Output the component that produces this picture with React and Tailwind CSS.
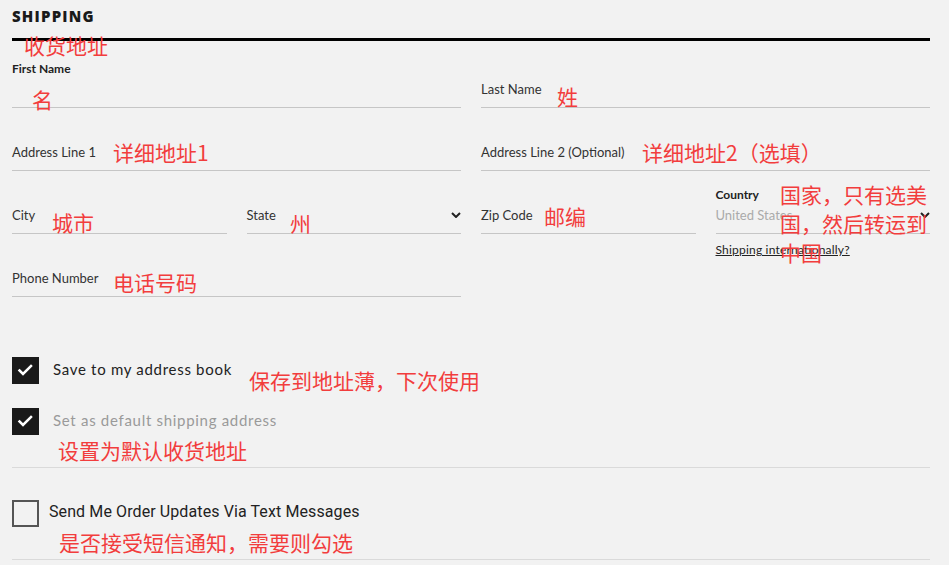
const lato = { fontFamily: 'Lato, "Noto Sans", sans-serif' }

function Chevron({ className }) {
  return (
    <svg width="10" height="6" viewBox="0 0 10 6" className={className}>
      <path d="M1 1 L5 5 L9 1" fill="none" stroke="#222" strokeWidth="2" />
    </svg>
  )
}

function Field({ label, span = 'col-span-2', chevron }) {
  return (
    <div className={`${span} h-[63px] flex flex-col justify-end pb-[10px] border-b border-[#c6c6c6]`}>
      <div className="flex items-center justify-between">
        <span className="text-[13px] leading-[16px] text-[#333]">{label}</span>
        {chevron && <Chevron />}
      </div>
    </div>
  )
}

function Note({ className, children }) {
  return (
    <div
      className={`absolute whitespace-nowrap text-[21px] leading-[21px] text-[#f23d3d] ${className}`}
      style={{ fontFamily: '"Noto Sans CJK SC", "Noto Sans", sans-serif' }}
    >
      {children}
    </div>
  )
}

function CheckBox({ checked }) {
  if (!checked) {
    return <span className="w-[27px] h-[27px] shrink-0 border-2 border-[#555]" />
  }
  return (
    <span className="w-[27px] h-[27px] shrink-0 bg-[#1a1a1a] flex items-center justify-center">
      <svg width="27" height="27" viewBox="0 0 27 27">
        <path d="M7.5 13.5 L11 17 L19 9" fill="none" stroke="#fff" strokeWidth="2.5" strokeLinecap="square" />
      </svg>
    </span>
  )
}

export default function App() {
  return (
    <div className="relative w-[949px] h-[565px] overflow-hidden bg-[#f2f2f2]" style={lato}>
      <div className="mx-3 w-[918px]">
        <h2
          className="pt-[6px] pb-[12px] text-[15px] leading-[20px] font-extrabold tracking-[1.2px] text-[#1a1a1a]"
          style={{ fontFamily: '"Open Sans", sans-serif' }}
        >
          SHIPPING
        </h2>
        <div className="h-[3px] bg-black" />

        <div className="mt-1 grid grid-cols-4 gap-x-5">
          <div className="col-span-2 h-[63px] pt-[17px] border-b border-[#c6c6c6]">
            <div className="text-[12px] leading-[14px] font-bold text-[#222]">First Name</div>
          </div>
          <Field label="Last Name" />

          <Field label="Address Line 1" />
          <Field label="Address Line 2 (Optional)" />

          <Field label="City" span="col-span-1" />
          <Field label="State" span="col-span-1" chevron />
          <Field label="Zip Code" span="col-span-1" />
          <div className="col-span-1 h-[63px] pt-[17px] border-b border-[#c6c6c6]">
            <div className="text-[12px] leading-[14px] font-bold text-[#222]">Country</div>
            <div className="mt-[5px] flex items-center justify-between">
              <span className="text-[13px] leading-[16px] text-[#aaa]">United States</span>
              <Chevron />
            </div>
          </div>

          <Field label="Phone Number" />
          <div className="col-start-4 pt-[9px]">
            <a className="block text-[12px] leading-[14px] tracking-[0.2px] text-[#222] underline">Shipping internationally?</a>
          </div>
        </div>

        <div className="mt-[60px] pb-[32px] border-b border-[#dadada]">
          <label className="flex items-center gap-[14px]">
            <CheckBox checked />
            <span className="pb-[4px] text-[15px] leading-[20px] tracking-[0.7px] text-[#222]">Save to my address book</span>
          </label>
          <label className="mt-[24px] flex items-center gap-[14px]">
            <CheckBox checked />
            <span className="pb-[4px] text-[15px] leading-[20px] tracking-[0.7px] text-[#9a9a9a]">Set as default shipping address</span>
          </label>
        </div>

        <div className="pt-[32px] pb-[32px] border-b border-[#dadada]">
          <label className="flex items-center gap-[10px]">
            <CheckBox />
            <span
              className="pb-[4px] text-[16px] leading-[20px] tracking-[0.1px] text-[#222]"
              style={{ fontFamily: 'Roboto, sans-serif' }}
            >
              Send Me Order Updates Via Text Messages
            </span>
          </label>
        </div>
      </div>

      <Note className="left-[24px] top-[35px]">收货地址</Note>
      <Note className="left-[32px] top-[89px]">名</Note>
      <Note className="left-[557px] top-[86px]">姓</Note>
      <Note className="left-[113px] top-[142px]">详细地址1</Note>
      <Note className="left-[642px] top-[142px]">详细地址2（选填）</Note>
      <Note className="left-[52px] top-[212px]">城市</Note>
      <Note className="left-[290px] top-[213px]">州</Note>
      <Note className="left-[544px] top-[206px]">邮编</Note>
      <Note className="left-[780px] top-[180px] leading-[29px]">
        国家，只有选美
        <br />
        国，然后转运到
        <br />
        中国
      </Note>
      <Note className="left-[113px] top-[272px]">电话号码</Note>
      <Note className="left-[249px] top-[370px]">保存到地址薄，下次使用</Note>
      <Note className="left-[58px] top-[440px]">设置为默认收货地址</Note>
      <Note className="left-[59px] top-[532px]">是否接受短信通知，需要则勾选</Note>
    </div>
  )
}
